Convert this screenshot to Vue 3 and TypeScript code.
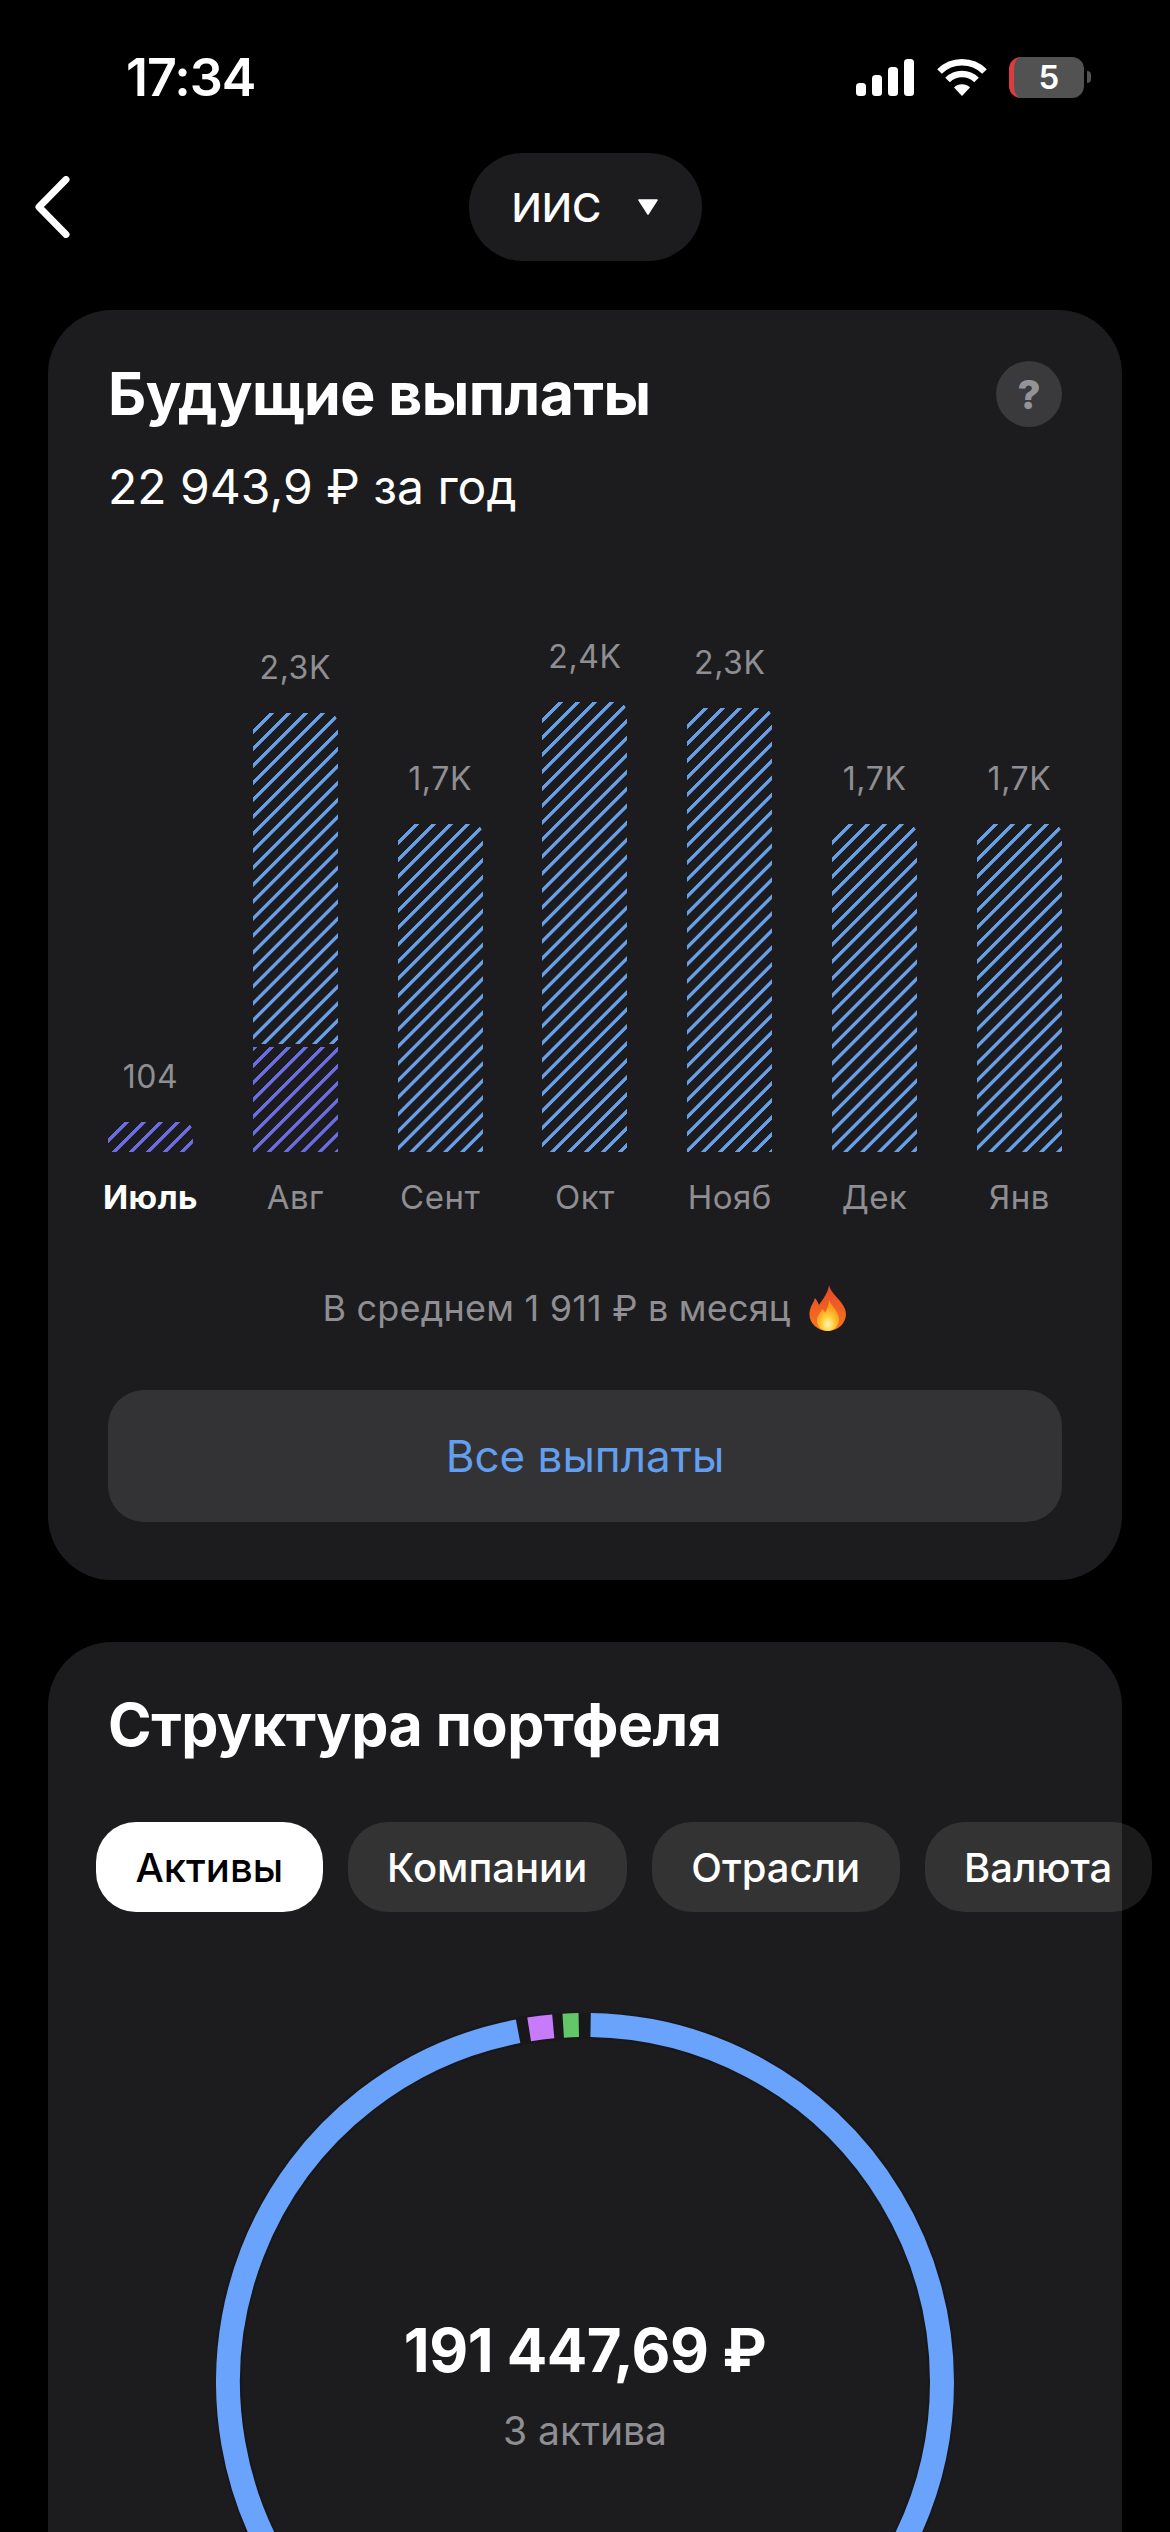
<script setup lang="ts">
interface Bar {
  month: string
  value: string
  height: number
  accent?: number
  active?: boolean
}

const bars: Bar[] = [
  { month: 'Июль', value: '104', height: 30, accent: 30, active: true },
  { month: 'Авг', value: '2,3K', height: 439, accent: 108 },
  { month: 'Сент', value: '1,7K', height: 328 },
  { month: 'Окт', value: '2,4K', height: 450 },
  { month: 'Нояб', value: '2,3K', height: 444 },
  { month: 'Дек', value: '1,7K', height: 328 },
  { month: 'Янв', value: '1,7K', height: 328 }
]

const chips = ['Активы', 'Компании', 'Отрасли', 'Валюта']

// ring segments, degrees clockwise from 12 o'clock
const R = 357
const point = (deg: number) => {
  const a = (deg * Math.PI) / 180
  return `${(369 + R * Math.sin(a)).toFixed(2)} ${(369 - R * Math.cos(a)).toFixed(2)}`
}
const arc = (from: number, to: number) =>
  `M${point(from)} A${R} ${R} 0 ${to - from > 180 ? 1 : 0} 1 ${point(to)}`

const segments = [
  { color: '#6aa3fc', d: arc(0.9, 349.2) },
  { color: '#c77bfb', d: arc(351, 354.9) },
  { color: '#63c76a', d: arc(356.5, 359) }
]
</script>

<template>
  <div class="page">
    <div class="status">
      <span class="time">17:34</span>
      <div class="status-icons">
        <svg class="signal" width="58" height="37" viewBox="0 0 58 37" fill="#fff">
          <rect x="0" y="24" width="10" height="13" rx="3.5" />
          <rect x="16" y="16" width="10" height="21" rx="3.5" />
          <rect x="32" y="8" width="10" height="29" rx="3.5" />
          <rect x="48" y="0" width="10" height="37" rx="3.5" />
        </svg>
        <svg class="wifi" width="50" height="37" viewBox="0 0 50 37" fill="none" stroke="#fff" stroke-width="6.5">
          <path d="M2.5 12.5 A32 32 0 0 1 47.5 12.5" />
          <path d="M10.5 21 A20.5 20.5 0 0 1 39.5 21" />
          <path d="M25 37 L17 28.5 A11.5 11.5 0 0 1 33 28.5 Z" fill="#fff" stroke="none" />
        </svg>
        <div class="battery">
          <div class="battery-body"><span>5</span></div>
          <div class="battery-nub"></div>
        </div>
      </div>
    </div>

    <div class="nav">
      <svg class="back" width="36" height="62" viewBox="0 0 36 62" fill="none">
        <path d="M31 3.5 L4 31 L31 58.5" stroke="#fff" stroke-width="7" stroke-linecap="round" stroke-linejoin="round" />
      </svg>
      <div class="pill">
        <span>ИИС</span>
        <svg width="22" height="16" viewBox="0 0 22 16"><path d="M2 1 H20 L11 15 Z" fill="#fff" stroke="#fff" stroke-width="1.5" stroke-linejoin="round" /></svg>
      </div>
    </div>

    <section class="card payouts">
      <div class="card-head">
        <h2 class="title">Будущие выплаты</h2>
        <div class="help">?</div>
      </div>
      <div class="subtitle">22 943,9 ₽ за год</div>

      <div class="chart">
        <div v-for="b in bars" :key="b.month" class="col">
          <span class="value">{{ b.value }}</span>
          <div class="bar" :style="{ height: b.height + 'px' }">
            <div
              v-if="b.accent"
              class="bar-accent"
              :class="{ split: b.accent < b.height }"
              :style="{ height: b.accent + 'px' }"
            ></div>
          </div>
        </div>
      </div>
      <div class="months">
        <span v-for="b in bars" :key="b.month" class="month" :class="{ active: b.active }">{{ b.month }}</span>
      </div>

      <div class="average">
        <span>В среднем 1 911 ₽ в месяц</span>
        <svg width="40" height="46" viewBox="0 0 40 46">
          <defs>
            <linearGradient id="flameOuter" x1="0" y1="0" x2="0" y2="1">
              <stop offset="0" stop-color="#e8452a" />
              <stop offset="1" stop-color="#f7791c" />
            </linearGradient>
            <radialGradient id="flameCore" cx="0.5" cy="0.78" r="0.55">
              <stop offset="0" stop-color="#fff6c8" />
              <stop offset="0.45" stop-color="#ffd23c" />
              <stop offset="1" stop-color="#fb9a1e" />
            </radialGradient>
          </defs>
          <path d="M21 0 C23 9 33 14 37 24 C41 35 32 46 20 46 C8 46 -1 36 2 25 C3 20 6 17 7 13 C9 15 10 18 11 20 C15 14 20 8 21 0 Z" fill="url(#flameOuter)" />
          <path d="M21 15 C23 21 31 26 31 34 C31 41 26 46 20 46 C13 46 8 41 9 34 C10 29 13 28 14 24 C16 25 17 27 17 28 C19 24 21 20 21 15 Z" fill="url(#flameCore)" />
        </svg>
      </div>

      <button class="all-btn">Все выплаты</button>
    </section>

    <section class="card structure">
      <h2 class="title">Структура портфеля</h2>
      <div class="chips">
        <div v-for="(c, i) in chips" :key="c" class="chip" :class="{ selected: i === 0 }">{{ c }}</div>
      </div>
      <div class="ring">
        <svg width="738" height="738" viewBox="0 0 738 738" fill="none">
          <circle cx="369" cy="369" r="357" stroke="#18181a" stroke-width="28" />
          <path v-for="s in segments" :key="s.color" :d="s.d" :stroke="s.color" stroke-width="24" />
        </svg>
        <div class="ring-text">
          <div class="total">191 447,69 ₽</div>
          <div class="count">3 актива</div>
        </div>
      </div>
    </section>
  </div>
</template>

<style scoped>
.page {
  width: 1170px;
  height: 2532px;
  overflow: hidden;
  padding-top: 50px;
  background: #000;
  color: #fff;
  font-family: Inter, "Noto Sans", sans-serif;
  box-sizing: border-box;
}

.status {
  display: flex;
  justify-content: space-between;
  align-items: center;
  height: 54px;
  padding: 0 79px 0 126px;
}

.time {
  font-size: 52px;
  font-weight: 600;
  letter-spacing: -1px;
}

.status-icons {
  display: flex;
  align-items: center;
}
.wifi { margin-left: 23px; }

.battery {
  display: flex;
  align-items: center;
  margin-left: 22px;
}
.battery-body {
  width: 75px;
  height: 41px;
  border-radius: 12px;
  background: #525252;
  border-left: 5px solid #dc3c40;
  box-sizing: border-box;
  display: flex;
  align-items: center;
  justify-content: center;
  font-size: 33px;
  font-weight: 600;
}
.battery-nub {
  width: 4px;
  height: 12px;
  margin-left: 3px;
  background: #525252;
  border-radius: 0 6px 6px 0;
}

.nav {
  display: grid;
  grid-template-columns: 1fr auto 1fr;
  align-items: center;
  height: 108px;
  margin-top: 49px;
}
.back { margin-left: 35px; }

.pill {
  width: 233px;
  height: 108px;
  box-sizing: border-box;
  padding-left: 43px;
  border-radius: 54px;
  background: #1c1c1e;
  display: flex;
  align-items: center;
  gap: 36px;
  font-size: 40px;
  font-weight: 500;
}

.card {
  margin: 49px 48px 0;
  background: #1c1c1e;
  border-radius: 64px;
  padding: 51px 60px 58px;
}

.card-head {
  display: flex;
  justify-content: space-between;
  align-items: center;
}

.title {
  margin: 0;
  font-size: 59px;
  line-height: 66px;
  font-weight: 700;
  letter-spacing: -0.5px;
}

.help {
  width: 66px;
  height: 66px;
  border-radius: 50%;
  background: #3a3a3c;
  color: #949498;
  display: flex;
  align-items: center;
  justify-content: center;
  font-size: 40px;
  font-weight: 800;
}

.subtitle {
  margin-top: 30px;
  font-size: 48px;
  line-height: 60px;
}

.chart {
  display: flex;
  justify-content: space-between;
  align-items: flex-end;
  height: 552px;
  margin-top: 83px;
}

.col {
  width: 85px;
  display: flex;
  flex-direction: column;
  align-items: center;
  gap: 25px;
}

.value {
  font-size: 32px;
  line-height: 40px;
  letter-spacing: 0.6px;
  color: #8e8e93;
  white-space: nowrap;
}

.bar {
  width: 85px;
  border-radius: 10px 10px 0 0;
  overflow: hidden;
  display: flex;
  flex-direction: column;
  justify-content: flex-end;
  background: repeating-linear-gradient(135deg, #689fe6 0 2.8px, transparent 3.4px 11.4px, #689fe6 12px);
}

.bar-accent {
  width: 100%;
  flex: none;
  box-sizing: border-box;
  background-color: #1c1c1e;
  background-image: repeating-linear-gradient(135deg, #6a6ee2 0 2.8px, transparent 3.4px 11.4px, #6a6ee2 12px);
}
.bar-accent.split {
  border-top: 3px solid #1c1c1e;
}

.months {
  display: flex;
  justify-content: space-between;
  margin-top: 25px;
}

.month {
  width: 85px;
  display: flex;
  justify-content: center;
  white-space: nowrap;
  font-size: 33px;
  line-height: 40px;
  letter-spacing: 0.5px;
  color: #8e8e93;
}
.month.active {
  color: #fff;
  font-weight: 700;
}

.average {
  display: flex;
  justify-content: center;
  align-items: center;
  gap: 17px;
  height: 50px;
  margin-top: 66px;
  font-size: 36px;
  letter-spacing: 0.2px;
  color: #8e8e93;
}

.all-btn {
  display: block;
  width: 100%;
  height: 132px;
  margin-top: 57px;
  border: 0;
  border-radius: 36px;
  background: #333336;
  color: #639fee;
  font-family: inherit;
  font-size: 44px;
}

.structure {
  margin-top: 62px;
  padding-top: 50px;
}

.chips {
  display: flex;
  gap: 25px;
  margin: 64px -60px 0 -12px;
}

.chip {
  height: 90px;
  padding: 0 39.5px;
  border-radius: 40px;
  background: rgba(255, 255, 255, 0.1);
  display: flex;
  align-items: center;
  font-size: 40px;
  font-weight: 500;
  white-space: nowrap;
}
.chip.selected {
  background: #fff;
  color: #000;
}

.ring {
  display: grid;
  width: 738px;
  margin: 101px auto 0;
}
.ring > * { grid-area: 1 / 1; }

.ring-text {
  display: flex;
  flex-direction: column;
  align-items: center;
  justify-content: center;
  padding-top: 3px;
}

.total {
  font-size: 60px;
  font-weight: 700;
  line-height: 70px;
  letter-spacing: -0.5px;
}

.count {
  margin-top: 24px;
  font-size: 39px;
  line-height: 44px;
  color: #8e8e93;
}
</style>
